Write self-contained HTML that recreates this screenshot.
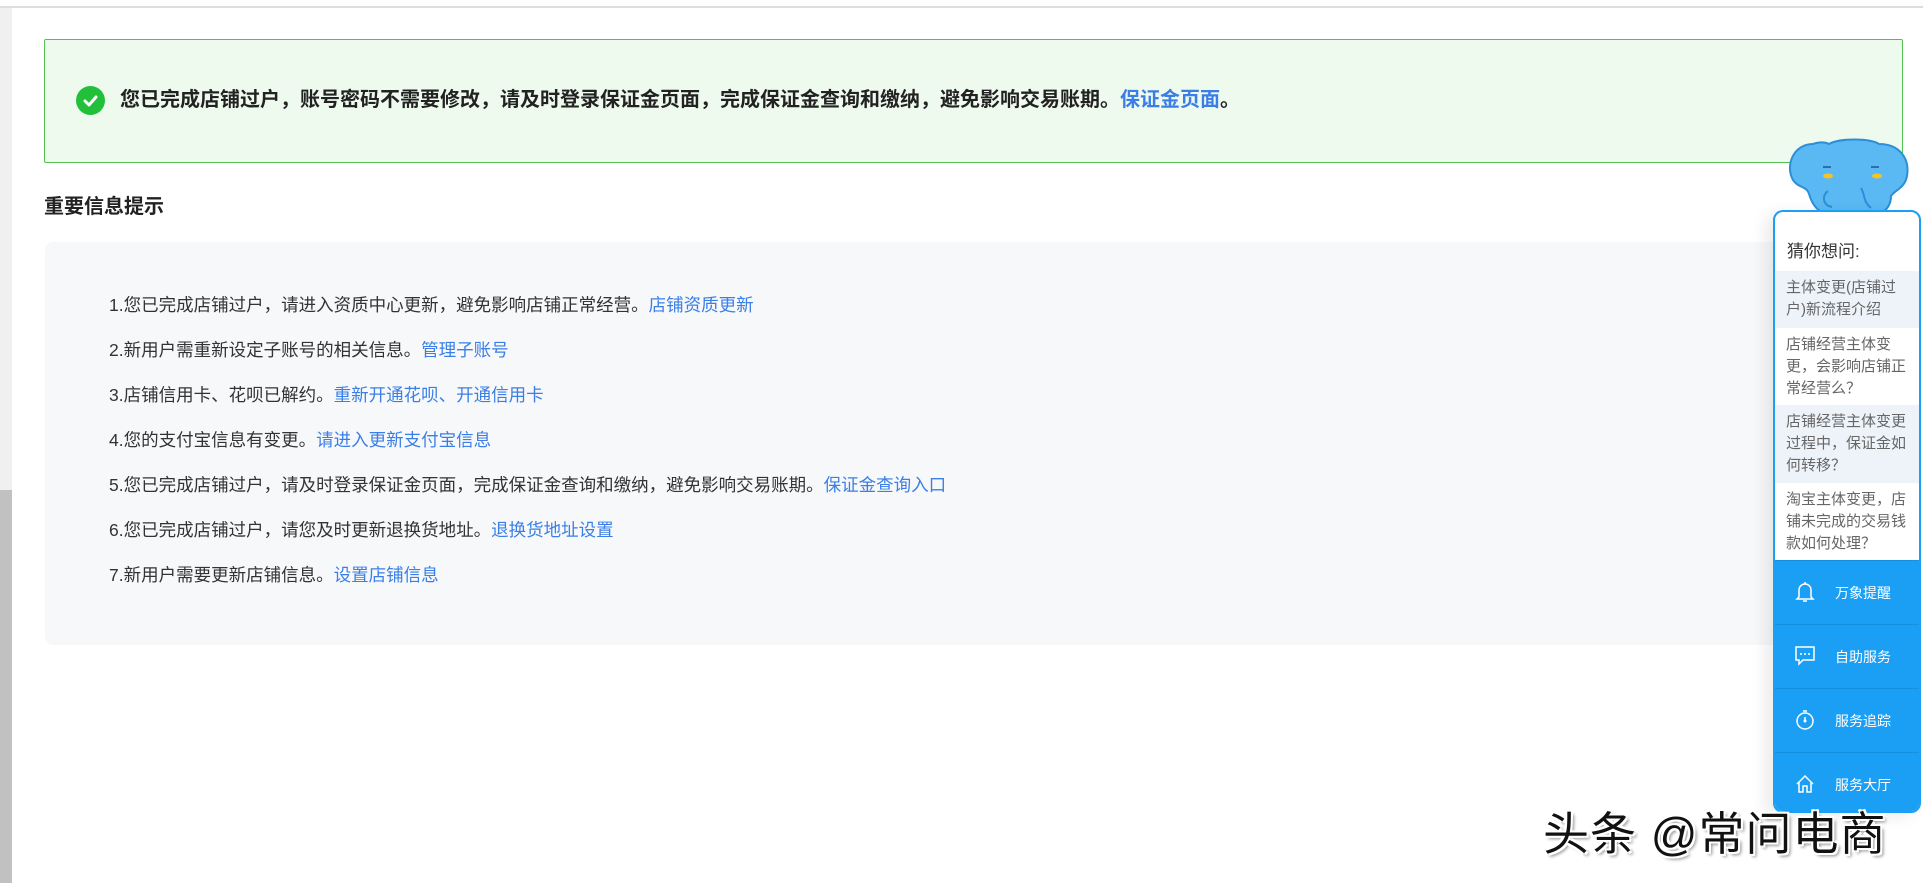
<!DOCTYPE html>
<html><head><meta charset="utf-8"><style>
*{margin:0;padding:0;box-sizing:border-box}
body{width:1923px;height:883px;background:#fff;position:relative;overflow:hidden;font-family:"Liberation Sans","Microsoft YaHei","Noto Sans CJK SC",sans-serif}
.topline{position:absolute;left:0;top:0;width:1923px;height:8px;border-bottom:2px solid #ddd;background:#fff}
.sb{position:absolute;left:0;top:8px;width:12px;height:875px;background:#f0f0f0}
.thumb{position:absolute;left:0;top:490px;width:12px;height:393px;background:#c1c1c1}
.banner{position:absolute;left:44px;top:39px;width:1859px;height:124px;border:1px solid #52c152;background:#effaef;border-radius:2px}
.banner .ic{position:absolute;left:31px;top:46px;width:29px;height:29px;border-radius:50%;background:#22c03a}
.banner .t{position:absolute;left:75px;top:47px;font-size:20px;font-weight:bold;color:#222;white-space:nowrap;line-height:26px}
a{color:#3b7fe6;text-decoration:none}
h3{position:absolute;left:44px;top:190px;font-size:20px;font-weight:bold;color:#222}
.box{position:absolute;left:45px;top:242px;width:1760px;height:403px;background:#f7f8fa;border-radius:8px}
.box p{position:absolute;left:64px;font-size:17.5px;color:#333;white-space:nowrap;line-height:22px}
.box p a{color:#3b7fe6}
.panel{position:absolute;left:1773px;top:210px;width:148px;height:603px;border:2px solid #1a9ff5;border-radius:10px;background:#fff;overflow:hidden;box-shadow:-8px 4px 16px rgba(0,0,0,.08)}
.panel .h{position:absolute;left:12px;top:25px;font-size:17px;color:#333}
.q{position:absolute;left:0;width:144px;padding:6px 8px 0 11px;font-size:15px;line-height:22px;color:#666}
.btn{position:absolute;left:0;width:144px;height:64px;background:#1a9ff5;border-top:1px solid #1590df;color:#fff;font-size:14px}
.btn span{position:absolute;left:60px;top:22px}
.btn svg{position:absolute;left:20px;top:20px}
.wm{position:absolute;left:1543px;top:798px;font-size:46px;color:#111;white-space:nowrap;letter-spacing:1px;text-shadow:2px 2px 0 #fff,-2px -2px 0 #fff,2px -2px 0 #fff,-2px 2px 0 #fff,3px 3px 3px #888}
</style></head><body>
<div class="topline"></div>
<div class="sb"></div><div class="thumb"></div>
<div class="banner"><div class="ic"><svg width="29" height="29" viewBox="0 0 29 29"><path d="M9 15l4 4 7-8" stroke="#fff" stroke-width="3" fill="none" stroke-linecap="round" stroke-linejoin="round"/></svg></div>
<div class="t">您已完成店铺过户，账号密码不需要修改，请及时登录保证金页面，完成保证金查询和缴纳，避免影响交易账期。<a>保证金页面</a>。</div></div>
<h3>重要信息提示</h3>
<div class="box">
<p style="top:52px">1.您已完成店铺过户，请进入资质中心更新，避免影响店铺正常经营。<a>店铺资质更新</a></p>
<p style="top:97px">2.新用户需重新设定子账号的相关信息。<a>管理子账号</a></p>
<p style="top:142px">3.店铺信用卡、花呗已解约。<a>重新开通花呗、开通信用卡</a></p>
<p style="top:187px">4.您的支付宝信息有变更。<a>请进入更新支付宝信息</a></p>
<p style="top:232px">5.您已完成店铺过户，请及时登录保证金页面，完成保证金查询和缴纳，避免影响交易账期。<a>保证金查询入口</a></p>
<p style="top:277px">6.您已完成店铺过户，请您及时更新退换货地址。<a>退换货地址设置</a></p>
<p style="top:322px">7.新用户需要更新店铺信息。<a>设置店铺信息</a></p>
</div>
<svg style="position:absolute;left:1783px;top:136px" width="126" height="80" viewBox="0 0 126 80">
<path d="M30 8C10 8 2 30 10 44c5 8 14 6 16 14 3 10 8 18 18 20h50c10-2 14-10 14-18 4-6 14-8 16-20 3-18-8-32-28-32-8-6-40-6-50 0-4-2-10-2-16 0z" fill="#5ab8f2" stroke="#2a8fd6" stroke-width="2"/>
<ellipse cx="45" cy="40" rx="5" ry="2.5" fill="#f6c324"/><ellipse cx="94" cy="40" rx="5" ry="2.5" fill="#f6c324"/>
<path d="M40 31h8M88 31h8" stroke="#2a6fb6" stroke-width="2"/>
<path d="M45 55c-6 4-6 14 4 16M78 52c4 6 2 14 10 20" stroke="#2a8fd6" stroke-width="2" fill="none"/>
</svg>
<div class="panel">
<div class="h">猜你想问:</div>
<div class="q" style="top:59px;height:57px;background:#eef3fa">主体变更(店铺过户)新流程介绍</div>
<div class="q" style="top:116px;height:77px">店铺经营主体变更，会影响店铺正常经营么？</div>
<div class="q" style="top:193px;height:78px;background:#eef3fa">店铺经营主体变更过程中，保证金如何转移？</div>
<div class="q" style="top:271px;height:77px">淘宝主体变更，店铺未完成的交易钱款如何处理？</div>
<div class="btn" style="top:348px"><svg width="20" height="22" viewBox="0 0 20 22"><path d="M4 16V9a6 6 0 0112 0v7l2 2H2zM8 20h4M10 1v2" stroke="#fff" stroke-width="1.5" fill="none"/></svg><span>万象提醒</span></div>
<div class="btn" style="top:412px"><svg width="20" height="22" viewBox="0 0 20 22"><path d="M1 2h18v13H8l-4 4v-4H1z" stroke="#fff" stroke-width="1.5" fill="none"/><circle cx="6" cy="9" r="1" fill="#fff"/><circle cx="10" cy="9" r="1" fill="#fff"/><circle cx="14" cy="9" r="1" fill="#fff"/></svg><span>自助服务</span></div>
<div class="btn" style="top:476px"><svg width="20" height="22" viewBox="0 0 20 22"><circle cx="10" cy="12" r="8" stroke="#fff" stroke-width="1.5" fill="none"/><path d="M8 2h4M10 8v4" stroke="#fff" stroke-width="1.5"/><circle cx="10" cy="12" r="1.5" fill="#fff"/></svg><span>服务追踪</span></div>
<div class="btn" style="top:540px"><svg width="20" height="22" viewBox="0 0 20 22"><path d="M2 11L10 3l8 8M4 9v10h4v-6h4v6h4V9" stroke="#fff" stroke-width="1.5" fill="none"/></svg><span>服务大厅</span></div>
</div>
<div class="wm">头条 @常问电商</div>
</body></html>
